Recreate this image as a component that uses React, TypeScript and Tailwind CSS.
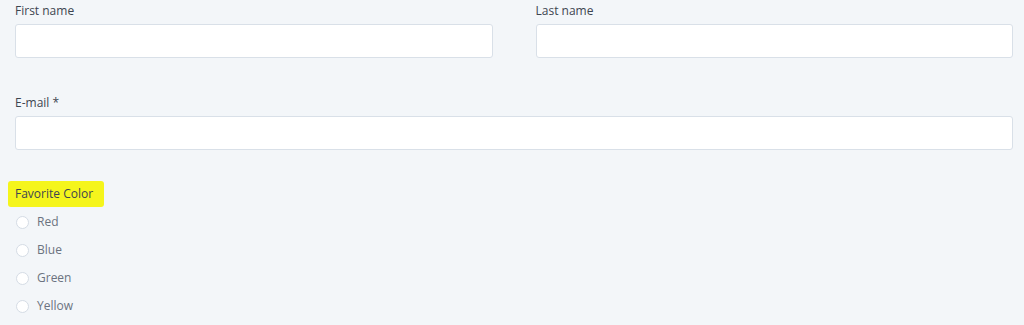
import React from 'react';

const Field = ({ label }: { label: string }) => (
  <div className="flex flex-col">
    <label className="text-[12px] leading-[15px] text-[#3d4550] mt-[3px] mb-[6px]">{label}</label>
    <div className="h-[34px] bg-white border border-[#d9e0e8] rounded-[3px]" />
  </div>
);

const App = () => {
  const colors = ['Red', 'Blue', 'Green', 'Yellow'];

  return (
    <div
      className="w-[1024px] h-[325px] bg-[#f3f6f9] px-[15px] pr-[11px] overflow-hidden"
      style={{ fontFamily: '"Open Sans", "Liberation Sans", sans-serif' }}
    >
      {/* Name row */}
      <div className="grid grid-cols-2 gap-x-[43px]">
        <Field label="First name" />
        <Field label="Last name" />
      </div>

      {/* Email */}
      <div className="mt-[34px]">
        <Field label="E-mail *" />
      </div>

      {/* Favorite color */}
      <div className="mt-[30px]">
        <span className="inline-block -ml-[7px] pl-[7px] pr-[11px] pt-[6px] pb-[6px] bg-[#f5f51c] rounded-[3px] text-[12px] leading-[14px] text-[#3d4550]">
          Favorite Color
        </span>
        <div className="flex flex-col mt-[1px]">
          {colors.map((c) => (
            <div key={c} className="flex items-center h-[28px] gap-[8px]">
              <span className="ml-[1px] w-[13px] h-[13px] rounded-full bg-white border border-[#d5dce5]" />
              <span className="text-[12px] text-[#6b7380]">{c}</span>
            </div>
          ))}
        </div>
      </div>
    </div>
  );
};

export default App;
